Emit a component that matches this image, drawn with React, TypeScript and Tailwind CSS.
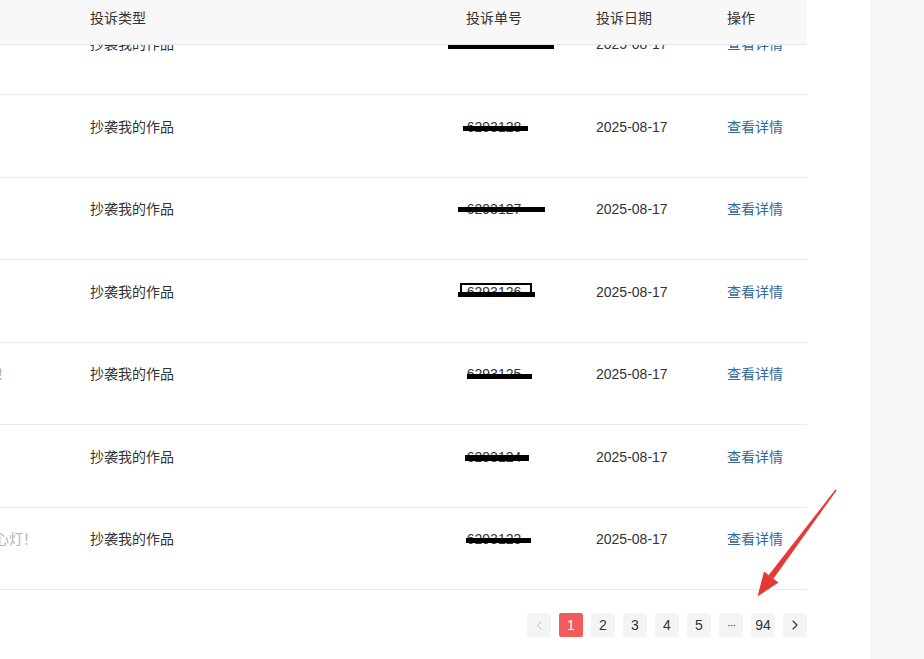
import { ChevronLeft, ChevronRight } from 'lucide-react'

type Mark = { cls: string }

interface RowData {
  title?: string
  titleCls?: string
  no: string
  heightCls: string
  textCls: string
  marks: Mark[]
}

const ROWS: RowData[] = [
  {
    no: '6293129',
    heightCls: 'h-[49px]',
    textCls: 'mt-[-11px]',
    marks: [{ cls: 'left-[48px] top-0 w-[106px] h-[4px] bg-black' }],
  },
  {
    no: '6293128',
    heightCls: 'h-[82px]',
    textCls: 'pt-[22px]',
    marks: [{ cls: 'left-[63px] top-[31px] w-[65px] h-[5px] bg-black' }],
  },
  {
    no: '6293127',
    heightCls: 'h-[81px]',
    textCls: 'pt-[21px]',
    marks: [{ cls: 'left-[58px] top-[29px] w-[87px] h-[5px] bg-black' }],
  },
  {
    no: '6293126',
    heightCls: 'h-[82px]',
    textCls: 'pt-[22px]',
    marks: [
      { cls: 'left-[60px] top-[23px] w-[72px] h-[11px] border-2 border-black' },
      { cls: 'left-[58px] top-[32px] w-[77px] h-[5px] bg-black' },
    ],
  },
  {
    title: '这是我的原创作品，请勿随意转载！',
    titleCls: 'mr-[79px]',
    no: '6293125',
    heightCls: 'h-[81px]',
    textCls: 'pt-[21px]',
    marks: [{ cls: 'left-[67px] top-[31px] w-[65px] h-[5px] bg-black' }],
  },
  {
    no: '6293124',
    heightCls: 'h-[82px]',
    textCls: 'pt-[22px]',
    marks: [{ cls: 'left-[65px] top-[30px] w-[64px] h-[6px] bg-black' }],
  },
  {
    title: '愿每一个作品都能点亮心灯！',
    titleCls: 'mr-[53px]',
    no: '6293123',
    heightCls: 'h-[81px]',
    textCls: 'pt-[21px]',
    marks: [{ cls: 'left-[66px] top-[30px] w-[65px] h-[5px] bg-black' }],
  },
]

function Row({ row }: { row: RowData }) {
  return (
    <div
      className={`flex ${row.heightCls} box-content overflow-hidden border-b border-[#ebebeb] text-[14px] leading-5 text-[#333]`}
    >
      <div className="flex w-[90px] justify-end overflow-hidden">
        {row.title && (
          <span
            className={`${row.textCls} ${row.titleCls} whitespace-nowrap text-[#b3b3b3]`}
          >
            {row.title}
          </span>
        )}
      </div>
      <div className="w-[310px]">
        <div className={row.textCls}>抄袭我的作品</div>
      </div>
      <div className="relative w-[188px] text-center">
        <div className={row.textCls}>{row.no}</div>
        {row.marks.map((m, i) => (
          <div key={i} className={`absolute ${m.cls}`} />
        ))}
      </div>
      <div className="w-[139px] pl-[8px]">
        <div className={row.textCls}>2025-08-17</div>
      </div>
      <div className="w-[80px]">
        <div className={`${row.textCls} cursor-pointer text-[#31689c]`}>
          查看详情
        </div>
      </div>
    </div>
  )
}

function PageBtn({
  children,
  active,
}: {
  children: React.ReactNode
  active?: boolean
}) {
  return (
    <div
      className={`flex h-[24px] w-[24px] items-center justify-center rounded-[2px] text-[14px] ${
        active ? 'bg-[#f25b5b] text-white' : 'bg-[#f4f4f5] text-[#333]'
      }`}
    >
      {children}
    </div>
  )
}

function Arrow() {
  return (
    <svg
      className="pointer-events-none absolute left-0 top-0"
      width="924"
      height="659"
      viewBox="0 0 924 659"
    >
      <polygon
        points="836.6,490.4 835.4,489.6 768.6,575.2 773.4,578.8"
        fill="#e53935"
      />
      <polygon points="757.5,596.5 764,571.5 778.5,582.5" fill="#e53935" />
    </svg>
  )
}

export default function App() {
  return (
    <div
      className="relative flex h-[659px] w-[924px] overflow-hidden bg-white"
      style={{ fontFamily: '"Liberation Sans", "Noto Sans CJK SC", sans-serif' }}
    >
      <div className="w-[870px]">
        <div className="w-[807px]">
          <div className="box-content flex h-[44px] border-b border-[#e6e6e6] bg-[#f8f8f8] text-[14px] leading-5 text-[#333]">
            <div className="w-[90px]" />
            <div className="w-[310px] pt-[8px]">投诉类型</div>
            <div className="w-[188px] pt-[8px] text-center">投诉单号</div>
            <div className="w-[139px] pl-[8px] pt-[8px]">投诉日期</div>
            <div className="w-[80px] pt-[8px]">操作</div>
          </div>
          {ROWS.map((r) => (
            <Row key={r.no} row={r} />
          ))}
          <div className="mt-[23px] flex justify-end gap-[8px]">
            <PageBtn>
              <ChevronLeft size={15} strokeWidth={1.5} className="text-[#bdbdbd]" />
            </PageBtn>
            <PageBtn active>1</PageBtn>
            <PageBtn>2</PageBtn>
            <PageBtn>3</PageBtn>
            <PageBtn>4</PageBtn>
            <PageBtn>5</PageBtn>
            <PageBtn>
              <span className="text-[11px] tracking-[-1px]">···</span>
            </PageBtn>
            <PageBtn>94</PageBtn>
            <PageBtn>
              <ChevronRight size={16} strokeWidth={1.6} className="text-[#333]" />
            </PageBtn>
          </div>
        </div>
      </div>
      <div className="flex-1 bg-[#f6f6f6]" />
      <Arrow />
    </div>
  )
}
